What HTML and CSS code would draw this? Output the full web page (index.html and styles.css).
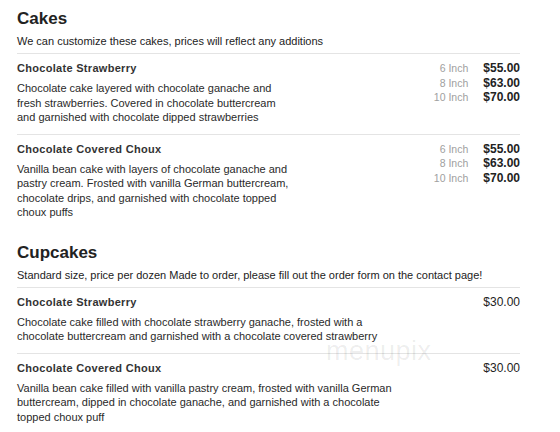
FILE: index.html
```html
<!DOCTYPE html>
<html lang="en">
<head>
<meta charset="utf-8">
<title>Menu</title>
<link rel="stylesheet" href="styles.css">
</head>
<body>
<main class="menu">
  <section class="section">
    <h2 class="section-title">Cakes</h2>
    <p class="section-note">We can customize these cakes, prices will reflect any additions</p>
    <div class="item">
      <div class="item-main">
        <h3 class="item-name">Chocolate Strawberry</h3>
        <p class="item-desc cake">Chocolate cake layered with chocolate ganache and fresh strawberries. Covered in chocolate buttercream and garnished with chocolate dipped strawberries</p>
      </div>
      <div class="prices">
        <span class="size">6 Inch</span><span class="price">$55.00</span>
        <span class="size">8 Inch</span><span class="price">$63.00</span>
        <span class="size">10 Inch</span><span class="price">$70.00</span>
      </div>
    </div>
    <div class="item">
      <div class="item-main">
        <h3 class="item-name">Chocolate Covered Choux</h3>
        <p class="item-desc cake">Vanilla bean cake with layers of chocolate ganache and pastry cream. Frosted with vanilla German buttercream, chocolate drips, and garnished with chocolate topped choux puffs</p>
      </div>
      <div class="prices">
        <span class="size">6 Inch</span><span class="price">$55.00</span>
        <span class="size">8 Inch</span><span class="price">$63.00</span>
        <span class="size">10 Inch</span><span class="price">$70.00</span>
      </div>
    </div>
  </section>
  <section class="section">
    <h2 class="section-title">Cupcakes</h2>
    <p class="section-note">Standard size, price per dozen Made to order, please fill out the order form on the contact page!</p>
    <div class="item">
      <div class="item-main">
        <h3 class="item-name">Chocolate Strawberry</h3>
        <p class="item-desc wide">Chocolate cake filled with chocolate strawberry ganache, frosted with a chocolate buttercream and garnished with a chocolate covered strawberry</p>
      </div>
      <div class="single-price">$30.00</div>
    </div>
    <div class="item">
      <div class="item-main">
        <h3 class="item-name">Chocolate Covered Choux</h3>
        <p class="item-desc wide">Vanilla bean cake filled with vanilla pastry cream, frosted with vanilla German buttercream, dipped in chocolate ganache, and garnished with a chocolate topped choux puff</p>
      </div>
      <div class="single-price">$30.00</div>
    </div>
  </section>
  <div class="watermark">menupix</div>
</main>
</body>
</html>
```

FILE: styles.css
```css
html, body {
  margin: 0;
  padding: 0;
  background: #ffffff;
}

body {
  font-family: "Liberation Sans", Arial, sans-serif;
  color: #333333;
}

.menu {
  position: relative;
  width: 503px;
  padding: 8px 0 0 17px;
}

.section + .section {
  margin-top: 13px;
}

.section-title {
  margin: 0;
  font-size: 17px;
  line-height: 22px;
  font-weight: bold;
  color: #222222;
}

.section-note {
  margin: 4px 0 5px;
  font-size: 11px;
  line-height: 14px;
  color: #222222;
}

.item {
  display: flex;
  justify-content: space-between;
  align-items: flex-start;
  border-top: 1px solid #e4e4e4;
  padding: 7px 0 9px;
}

.item-name {
  margin: 0 0 5px;
  font-size: 11px;
  line-height: 15px;
  font-weight: bold;
  letter-spacing: 0.3px;
  color: #333333;
}

.item-desc {
  margin: 0;
  font-size: 11px;
  line-height: 14.5px;
  color: #2a2a2a;
}

.item-desc.cake {
  width: 275px;
}

.item-desc.wide {
  width: 385px;
}

.prices {
  display: grid;
  grid-template-columns: auto auto;
  column-gap: 15px;
  align-items: baseline;
  line-height: 14.5px;
}

.size {
  font-size: 10.5px;
  color: #a0a0a0;
  text-align: right;
}

.price {
  font-size: 12px;
  font-weight: bold;
  color: #222222;
  text-align: right;
}

.single-price {
  font-size: 12px;
  line-height: 15px;
  color: #222222;
}

.watermark {
  position: absolute;
  left: 326px;
  top: 336px;
  font-size: 27px;
  letter-spacing: 0.5px;
  color: rgba(0, 0, 0, 0.08);
}
```
